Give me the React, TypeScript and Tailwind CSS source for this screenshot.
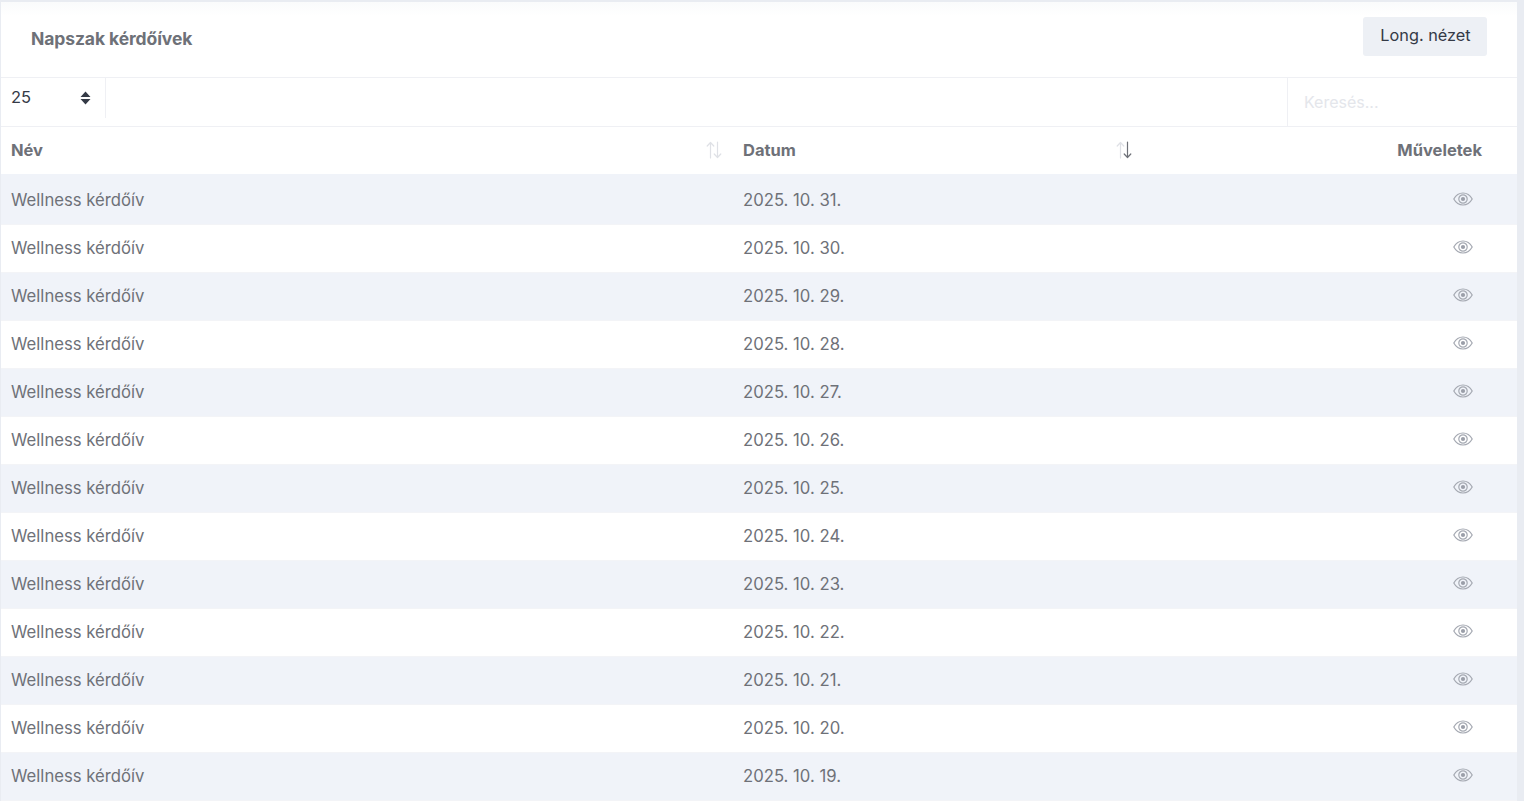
import React from "react";

const dates = ["31", "30", "29", "28", "27", "26", "25", "24", "23", "22", "21", "20", "19"];

function SortIcon({ active }: { active?: boolean }) {
  return (
    <svg width="16" height="18" viewBox="0 0 16 18" fill="none" strokeWidth="1.2" strokeLinecap="round" strokeLinejoin="round">
      <path d="M4.5 17V1.5M1.2 5 4.5 1.5 7.8 5" stroke="#dfe1e6" />
      <path d="M11.5 1v15.5M8.2 13l3.3 3.5 3.3-3.5" stroke={active ? "#6e7178" : "#dfe1e6"} />
    </svg>
  );
}

function Eye() {
  return (
    <svg width="20" height="14" viewBox="0 0 20 14" fill="none" stroke="#a5a9b2" strokeWidth="1.2">
      <path d="M0.8 7C3 3 6.2 1 10 1s7 2 9.2 6C17 11 13.8 13 10 13S3 11 0.8 7Z" />
      <circle cx="10" cy="7" r="4.2" />
      <circle cx="10" cy="7" r="2.1" fill="#9a9ea8" stroke="none" />
    </svg>
  );
}

export default function App() {
  return (
    <div className="h-[801px] overflow-hidden bg-[#e9ecf2] pt-[2px] pl-[1px] pr-[7px] font-['Inter','Liberation_Sans',sans-serif]">
      <div className="rounded-t-[4px] bg-white">
        <div className="flex h-[76px] items-center justify-between border-b border-[#eff0f4] bg-gradient-to-b from-[#fafbfc] to-white to-[14px] pl-[30px] pr-[30px]">
          <h1 className="text-[17.5px] font-bold tracking-[-0.1px] text-[#6e7178]">Napszak kérdőívek</h1>
          <button className="-mt-[6px] h-[39px] w-[124px] rounded-[3px] bg-[#edf0f5] pb-[3px] pl-[1px] text-[16.3px] text-[#343a46]">Long. nézet</button>
        </div>
        <div className="flex h-[49px] items-stretch justify-between border-b border-[#eff0f4]">
          <div className="mb-[8px] flex w-[105px] items-center justify-between border-r border-[#eff0f4] pb-[2px] pl-[10px] pr-[14px]">
            <span className="text-[16.5px] text-[#343a46]">25</span>
            <svg className="mt-[2px]" width="11" height="14" viewBox="0 0 11 14" fill="#343a46">
              <path d="M5.5 0.5 10.5 6H0.5ZM5.5 13.5 0.5 8h10Z" />
            </svg>
          </div>
          <div className="flex w-[230px] items-center border-l border-[#eff0f4] pl-[16px] text-[16px] text-[#e4e6eb]">Keresés...</div>
        </div>
        <div className="flex h-[47px] items-center pb-[2px] text-[16.5px] font-bold text-[#6e7178]">
          <div className="flex w-[732px] items-center justify-between pl-[10px] pr-[11px]">
            <span className="mt-[2px]">Név</span>
            <SortIcon />
          </div>
          <div className="flex w-[410px] items-center justify-between pl-[10px] pr-[11px]">
            <span className="mt-[2px]">Datum</span>
            <SortIcon active />
          </div>
          <div className="mt-[2px] flex-1 pr-[35px] text-right">Műveletek</div>
        </div>
        {dates.map((d, i) => (
          <div key={d} className={`flex items-center border-b border-[#f3f4f7] text-[16.7px] text-[#6e7178] ${i === 0 ? "h-[51px] pt-[4px]" : "h-[48px] pt-[1px]"} ${i % 2 === 0 ? "bg-[#f0f3f9]" : "bg-white"}`}>
            <div className="w-[732px] pl-[10px]">Wellness kérdőív</div>
            <div className="w-[410px] pl-[10px]">2025. 10. {d}.</div>
            <div className={`flex flex-1 justify-end pr-[44px] ${i === 0 ? "-mt-[4px]" : "-mt-[5px]"}`}>
              <Eye />
            </div>
          </div>
        ))}
      </div>
    </div>
  );
}
